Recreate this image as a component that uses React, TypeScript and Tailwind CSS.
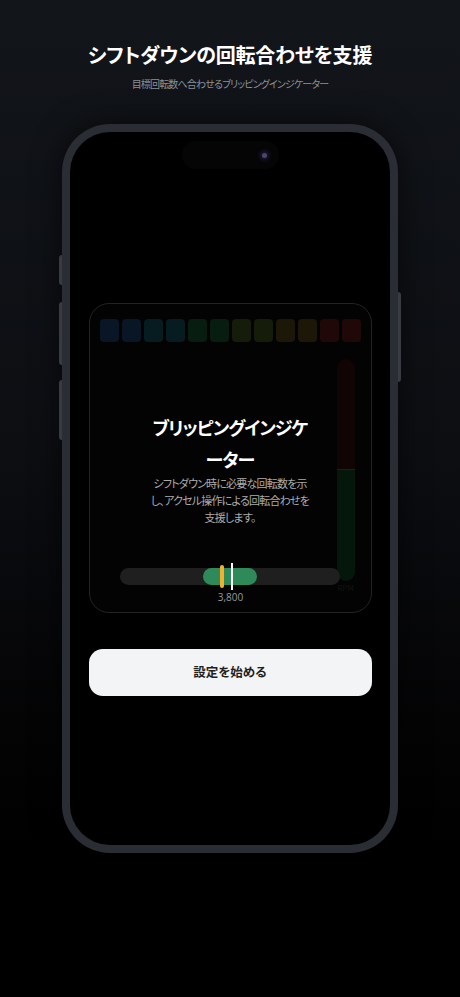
import React from "react";

const jp = { fontFamily: '"Noto Sans CJK JP", "Noto Sans", sans-serif', fontFeatureSettings: '"palt"' } as React.CSSProperties;

const leds = [
  "#081626", "#081626", "#071c20", "#071c20", "#071d10", "#071d10",
  "#151c09", "#151c09", "#1d1708", "#1d1708", "#200808", "#200808",
];

export default function App() {
  return (
    <div
      className="w-full min-h-[997px] flex flex-col items-center bg-[linear-gradient(to_bottom,#12151a_0%,#0c0e12_45%,#040405_72%,#000_85%)]"
      style={jp}
    >
      <h1 className="mt-[41px] text-[20px] leading-[28px] font-bold text-white tracking-[-0.2px]">
        シフトダウンの回転合わせを支援
      </h1>
      <p className="mt-[8px] text-[10px] leading-[14px] text-[#8b9099] tracking-[-0.85px]">
        目標回転数へ合わせるブリッピングインジケーター
      </p>

      {/* phone */}
      <div className="relative mt-[33px] w-[336px] h-[729px] rounded-[48px] bg-[#2a2d33] p-[8px] shadow-[0_0_30px_rgba(0,0,0,0.6)]">
        <div className="absolute left-[-3px] top-[131px] w-[3px] h-[30px] rounded-l-sm bg-[#383b42]" />
        <div className="absolute left-[-3px] top-[178px] w-[3px] h-[63px] rounded-l-sm bg-[#383b42]" />
        <div className="absolute left-[-3px] top-[256px] w-[3px] h-[60px] rounded-l-sm bg-[#383b42]" />
        <div className="absolute right-[-3px] top-[168px] w-[3px] h-[90px] rounded-r-sm bg-[#383b42]" />

        <div className="w-full h-full rounded-[40px] bg-black flex flex-col items-center overflow-hidden">
          {/* dynamic island */}
          <div className="mt-[9px] w-[97px] h-[28px] rounded-full bg-[#050506] flex items-center justify-end pr-[12px]">
            <div className="w-[5px] h-[5px] rounded-full bg-[#4a4470] shadow-[0_0_4px_2px_rgba(90,80,150,0.3)]" />
          </div>

          {/* card */}
          <div className="relative mt-[134px] w-[283px] h-[310px] rounded-[20px] border border-[#232323] bg-[#030303]">
            <div className="px-[10px] pt-[15px]">
              <div className="flex gap-[3px]">
                {leds.map((c, i) => (
                  <div key={i} className="w-[19px] h-[23px] rounded-[4px]" style={{ backgroundColor: c }} />
                ))}
              </div>
              <div className="flex justify-end pr-[6px]">
                <div className="flex flex-col items-center">
                  <div className="mt-[17px] w-[18px] h-[222px] rounded-full overflow-hidden flex flex-col">
                    <div className="h-[110px] bg-[#110404]" />
                    <div className="h-[1px] bg-[#1a221c]" />
                    <div className="flex-1 bg-[#05170b]" />
                  </div>
                  <span className="mt-[2px] text-[8px] leading-[10px] text-[#141414]">RPM</span>
                </div>
              </div>
            </div>

            {/* overlay */}
            <div className="absolute inset-0 flex flex-col items-center">
              <h2 className="mt-[107px] text-[18px] leading-[32px] font-bold text-white text-center tracking-[-1px]">
                ブリッピングインジケ
                <br />
                ーター
              </h2>
              <p className="mt-0 text-[11px] leading-[17px] text-[#acacac] text-center tracking-[-0.8px]">
                シフトダウン時に必要な回転数を示
                <br />
                し、アクセル操作による回転合わせを
                <br />
                支援します。
              </p>
              <div className="mt-[42px] self-start ml-[30px] relative w-[220px] h-[17px] rounded-full bg-[#1f1f1f]">
                <div className="absolute left-[83px] top-0 w-[54px] h-[17px] rounded-full bg-[#2e8a58]" />
                <div className="absolute left-[100px] top-[-3px] w-[4px] h-[23px] rounded-full bg-[#f2b12c]" />
                <div className="absolute left-[111px] top-[-5px] w-[2px] h-[27px] bg-white" />
              </div>
              <span className="mt-[6px] text-[10px] leading-[12px] text-[#9a9a9a] ml-[1px]" style={{ fontFamily: '"Open Sans", "Noto Sans", sans-serif' }}>
                3,800
              </span>
            </div>
          </div>

          {/* button */}
          <button className="mt-[36px] w-[283px] h-[47px] rounded-[14px] bg-[#f3f4f6] text-[12.5px] font-semibold text-[#1f1f1f]">
            設定を始める
          </button>
        </div>
      </div>
    </div>
  );
}
